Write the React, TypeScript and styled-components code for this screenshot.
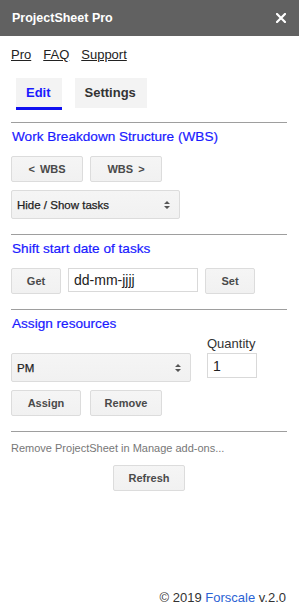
import React from 'react';
import styled, { createGlobalStyle } from 'styled-components';

const GlobalStyle = createGlobalStyle`
  html, body {
    margin: 0;
    padding: 0;
    background: #fff;
  }
  body {
    font-family: 'Liberation Sans', Arial, sans-serif;
    color: #222;
  }
`;

const Sidebar = styled.div`
  width: 299px;
  min-height: 612px;
  display: flex;
  flex-direction: column;
  box-sizing: border-box;
`;

const TitleBar = styled.header`
  height: 36px;
  flex: none;
  background: #616161;
  display: flex;
  align-items: center;
  justify-content: space-between;
  padding: 0 13px 0 12px;

  h1 {
    margin: 0;
    color: #fff;
    font-size: 12.5px;
    font-weight: 700;
  }
`;

const Content = styled.main`
  padding: 0 12px 0 11px;
  display: flex;
  flex-direction: column;
`;

const LinkRow = styled.nav`
  margin-top: 11px;
  display: flex;
  gap: 12px;
  font-size: 13px;
  line-height: 15px;

  a {
    color: #222;
    text-decoration: underline;
  }
`;

const TabBar = styled.div`
  margin-top: 16px;
  padding-left: 5px;
  display: flex;
  align-items: flex-start;
  gap: 13px;
`;

const Tab = styled.div<{ $active?: boolean }>`
  background: #f3f3f3;
  padding: 0 11px 0 10px;
  font-size: 13px;
  font-weight: 700;
  height: ${(p) => (p.$active ? '29px' : '30px')};
  line-height: ${(p) => (p.$active ? '29px' : '30px')};
  color: ${(p) => (p.$active ? '#1a1aff' : '#333')};
  border-bottom: ${(p) => (p.$active ? '3px solid #1010f0' : 'none')};
`;

const Divider = styled.hr<{ $top: number }>`
  margin: ${(p) => p.$top}px 0 0;
  border: none;
  height: 1px;
  background: #9e9e9e;
`;

const SectionTitle = styled.h2`
  margin: 6px 0 0;
  font-size: 13.6px;
  line-height: 16px;
  font-weight: 400;
  color: #1a1aff;
  padding-left: 1px;
  -webkit-text-stroke: 0.2px #1a1aff;
`;

const Row = styled.div<{ $top: number; $gap?: number; $center?: boolean }>`
  margin-top: ${(p) => p.$top}px;
  display: flex;
  align-items: flex-start;
  gap: ${(p) => p.$gap ?? 7}px;
  justify-content: ${(p) => (p.$center ? 'center' : 'flex-start')};
`;

const Button = styled.button<{ $w: number }>`
  width: ${(p) => p.$w}px;
  height: 26px;
  box-sizing: border-box;
  padding: 0;
  border: 1px solid #dcdcdc;
  border-radius: 2px;
  background: linear-gradient(#f5f5f5, #f1f1f1);
  color: #4a4a4a;
  font-family: 'Liberation Sans', Arial, sans-serif;
  font-size: 11px;
  font-weight: 700;
  word-spacing: 2px;
`;

const SelectBox = styled.div<{ $w: number; $top?: number }>`
  margin-top: ${(p) => p.$top ?? 0}px;
  width: ${(p) => p.$w}px;
  height: 29px;
  box-sizing: border-box;
  border: 1px solid #dcdcdc;
  border-radius: 2px;
  background: linear-gradient(#f5f5f5, #f1f1f1);
  display: flex;
  align-items: center;
  justify-content: space-between;
  padding: 0 9px 0 5px;
  color: #222;
  font-size: 11.5px;
  font-weight: 400;
  -webkit-text-stroke: 0.25px #222;
`;

const TextInput = styled.input<{ $w: number; $h: number }>`
  width: ${(p) => p.$w}px;
  height: ${(p) => p.$h}px;
  box-sizing: border-box;
  margin: 0;
  border: 1px solid #d9d9d9;
  padding: 0 5px;
  font-family: 'Liberation Sans', Arial, sans-serif;
  font-size: 14px;
  color: #222;
  background: #fff;
  outline: none;
`;

const ResourceGrid = styled.div`
  margin-top: 4px;
  display: grid;
  grid-template-columns: 180px 50px;
  column-gap: 16px;
  row-gap: 2px;
  align-items: start;
`;

const FieldLabel = styled.label`
  grid-column: 2;
  font-size: 13px;
  line-height: 15px;
  color: #333;
`;

const Note = styled.p`
  margin: 10px 0 0;
  font-size: 11px;
  line-height: 13px;
  color: #777;
`;

const Footer = styled.footer`
  margin-top: auto;
  padding: 0 13px 7px 0;
  text-align: right;
  font-size: 13px;
  line-height: 15px;
  color: #333;

  a {
    color: #2a62d4;
    text-decoration: none;
  }
`;

const CloseIcon = () => (
  <svg width="10" height="10" viewBox="0 0 10 10">
    <path d="M1 1 L9 9 M9 1 L1 9" stroke="#fff" strokeWidth="2.2" strokeLinecap="square" />
  </svg>
);

const SortArrows = () => (
  <svg width="6" height="8" viewBox="0 0 6 8">
    <path d="M3 0 L6 3 L0 3 Z M0 5 L6 5 L3 8 Z" fill="#555" />
  </svg>
);

const Select = ({ label, w, top }: { label: string; w: number; top?: number }) => (
  <SelectBox $w={w} $top={top}>
    <span>{label}</span>
    <SortArrows />
  </SelectBox>
);

export default function App() {
  return (
    <>
      <GlobalStyle />
      <Sidebar>
        <TitleBar>
          <h1>ProjectSheet Pro</h1>
          <CloseIcon />
        </TitleBar>

        <Content>
          <LinkRow>
            <a href="#">Pro</a>
            <a href="#">FAQ</a>
            <a href="#">Support</a>
          </LinkRow>

          <TabBar>
            <Tab $active>Edit</Tab>
            <Tab>Settings</Tab>
          </TabBar>

          <Divider $top={12} />
          <SectionTitle>Work Breakdown Structure (WBS)</SectionTitle>
          <Row $top={11}>
            <Button $w={72}>&lt; WBS</Button>
            <Button $w={72}>WBS &gt;</Button>
          </Row>
          <Select label="Hide / Show tasks" w={169} top={8} />

          <Divider $top={15} />
          <SectionTitle>Shift start date of tasks</SectionTitle>
          <Row $top={11}>
            <Button $w={50}>Get</Button>
            <TextInput $w={130} $h={24} defaultValue="dd-mm-jjjj" />
            <Button $w={50}>Set</Button>
          </Row>

          <Divider $top={15} />
          <SectionTitle>Assign resources</SectionTitle>
          <ResourceGrid>
            <FieldLabel>Quantity</FieldLabel>
            <Select label="PM" w={180} />
            <TextInput $w={50} $h={25} defaultValue="1" />
          </ResourceGrid>
          <Row $top={8} $gap={9}>
            <Button $w={70}>Assign</Button>
            <Button $w={72}>Remove</Button>
          </Row>

          <Divider $top={15} />
          <Note>Remove ProjectSheet in Manage add-ons...</Note>
          <Row $top={10} $center>
            <Button $w={72}>Refresh</Button>
          </Row>
        </Content>

        <Footer>
          © 2019 <a href="#">Forscale</a> v.2.0
        </Footer>
      </Sidebar>
    </>
  );
}
